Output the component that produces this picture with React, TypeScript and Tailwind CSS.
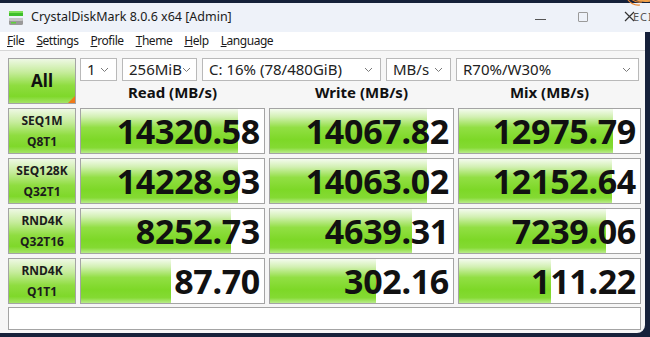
import React from "react";

const rows = [
  { a: "SEQ1M", b: "Q8T1", v: ["14320.58", "14067.82", "12975.79"] },
  { a: "SEQ128K", b: "Q32T1", v: ["14228.93", "14063.02", "12152.64"] },
  { a: "RND4K", b: "Q32T16", v: ["8252.73", "4639.31", "7239.06"] },
  { a: "RND4K", b: "Q1T1", v: ["87.70", "302.16", "111.22"] },
];

const frac = (s: string) => Math.max(0, Math.min(1, (Math.log10(parseFloat(s)) + 1) / 6));

function Chevron() {
  return (
    <svg width="9" height="6" viewBox="0 0 9 6" className="shrink-0">
      <path d="M1 1 L4.5 4.5 L8 1" fill="none" stroke="#7a7a7a" strokeWidth="1" />
    </svg>
  );
}

function Drop({ w, text }: { w: string; text: string }) {
  return (
    <div className={`${w} h-[23px] flex items-center justify-between border border-[#b9b9b9] bg-white pl-[6px] pr-[7px] text-[15px] text-[#222]`}>
      <span className="leading-none whitespace-nowrap">{text}</span>
      <Chevron />
    </div>
  );
}

function Cell({ value }: { value: string }) {
  const f = frac(value);
  return (
    <div className="relative h-[46px] border border-[#a4a4a4] bg-white overflow-hidden">
      <div
        className="absolute left-0 top-0 bottom-0 bg-[linear-gradient(to_bottom,#f4fbee_0%,#d2f0b2_18%,#92df44_42%,#7dd827_70%,#84da33_88%,#b9ec8a_100%)]"
        style={{ width: `${f * 100}%` }}
      />
      <div className="relative h-full flex items-center justify-end pr-[4px] text-[34px] font-bold text-[#111] leading-none tracking-[-0.3px]">
        {value}
      </div>
    </div>
  );
}

function Label({ a, b }: { a: string; b: string }) {
  return (
    <div className="h-[46px] border border-[#a4a4a4] bg-[linear-gradient(to_bottom,#eef8e4_0%,#c6ec9c_30%,#8fdd40_60%,#7fd82a_85%,#a4e466_100%)] flex flex-col items-center justify-center gap-[9px] text-[12px] font-bold text-[#1c1c1c] leading-none">
      <span>{a}</span>
      <span>{b}</span>
    </div>
  );
}

export default function App() {
  return (
    <div className="relative w-[650px] h-[337px] bg-[#16213a] overflow-hidden" style={{ fontFamily: '"Noto Sans", "Open Sans", sans-serif' }}>
      {/* Title bar */}
      <div className="mt-[3px] h-[29px] bg-[#eef2f9] flex items-center pl-[8px]">
        <svg width="16" height="16" viewBox="0 0 16 16" className="shrink-0">
          <rect x="1" y="1" width="14" height="5" fill="#3fbf2a" />
          <rect x="1" y="1" width="14" height="2" fill="#7fe05a" />
          <rect x="1" y="8" width="14" height="7" rx="1.5" fill="#9a9a9a" />
          <rect x="1" y="8" width="14" height="3" rx="1" fill="#c4c4c4" />
          <rect x="3" y="12" width="5" height="1.5" fill="#5fd33a" />
        </svg>
        <span className="ml-[7px] text-[12.5px] text-[#1a1a1a] leading-none">CrystalDiskMark 8.0.6 x64 [Admin]</span>
      </div>
      {/* caption buttons + watermark overlay */}
      <div className="absolute left-[535px] top-[19px] w-[11px] h-[1px] bg-[#555]" />
      <div className="absolute left-[578px] top-[12px] w-[10px] h-[10px] border border-[#9a9a9a] rounded-[1px]" />
      <div className="absolute left-[624px] top-[11px] flex items-center">
        <svg width="11" height="11" viewBox="0 0 11 11">
          <path d="M1 1 L10 10 M10 1 L1 10" stroke="#333" strokeWidth="1.2" />
        </svg>
        <span className="text-[11px] text-[#555] tracking-[1px] leading-none -ml-[2px]">ECI</span>
      </div>
      <svg className="absolute right-[-2px] top-[-4px]" width="28" height="14" viewBox="0 0 28 14">
        <path d="M2 0 Q6 10 16 9" fill="none" stroke="#e8842c" strokeWidth="1.2" />
        <path d="M5 0 Q9 7 18 6" fill="none" stroke="#e8842c" strokeWidth="1.2" />
        <path d="M9 0 Q13 6 28 4" fill="none" stroke="#f0a04a" strokeWidth="3" />
      </svg>

      <div className="mr-[5px] h-[301px] bg-[#f6f6f6] rounded-br-[8px] overflow-hidden flex flex-col">
        {/* Menu bar */}
        <div className="h-[19px] bg-white border-b border-[#d6d6d6] flex items-center pl-[7px] pb-[1px] gap-[12px] text-[12px] tracking-[-0.45px] text-[#1a1a1a] leading-none shrink-0">
          <span><u>F</u>ile</span>
          <span><u>S</u>ettings</span>
          <span><u>P</u>rofile</span>
          <span><u>T</u>heme</span>
          <span><u>H</u>elp</span>
          <span><u>L</u>anguage</span>
        </div>

        {/* Content */}
        <div className="pl-[8px] pt-[7px] grid grid-cols-[68px_185px_185px_183px] gap-x-[4px] gap-y-[4px]">
          <div className="relative h-[46px] border border-[#a4a4a4] bg-[linear-gradient(to_bottom,#eef8e4_0%,#c6ec9c_30%,#8fdd40_60%,#7fd82a_85%,#a4e466_100%)] flex items-center justify-center text-[17px] font-bold text-[#111]">
            All
            <div className="absolute right-0 bottom-0 w-0 h-0 border-l-[7px] border-l-transparent border-b-[7px] border-b-[#f07a1a]" />
          </div>
          <div className="col-span-3 flex flex-col">
            <div className="flex gap-[5px]">
              <Drop w="w-[37px]" text="1" />
              <Drop w="w-[75px]" text="256MiB" />
              <Drop w="w-[179px]" text="C: 16% (78/480GiB)" />
              <Drop w="w-[65px]" text="MB/s" />
              <Drop w="w-[183px]" text="R70%/W30%" />
            </div>
            <div className="grid grid-cols-[185px_185px_183px] gap-x-[4px] h-[23px] items-center text-[15px] font-bold text-[#111] leading-none">
              <span className="text-center">Read (MB/s)</span>
              <span className="text-center">Write (MB/s)</span>
              <span className="text-center">Mix (MB/s)</span>
            </div>
          </div>
          {rows.map((r, i) => (
            <React.Fragment key={i}>
              <Label a={r.a} b={r.b} />
              {r.v.map((v, j) => (
                <Cell key={j} value={v} />
              ))}
            </React.Fragment>
          ))}
          <div className="col-span-4 h-[23px] border border-[#a4a4a4] bg-white mt-[-1px]" />
        </div>
      </div>
    </div>
  );
}
